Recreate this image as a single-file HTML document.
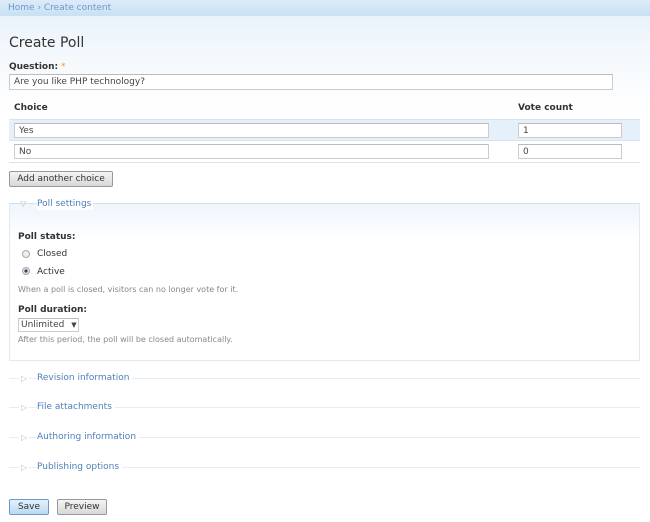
<!DOCTYPE html>
<html><head><style>
*{box-sizing:border-box;margin:0;padding:0}
body{width:650px;height:522px;overflow:hidden;font-family:"DejaVu Sans","Liberation Sans",sans-serif;font-size:9px;color:#333;background:linear-gradient(#eaf3fb 18px,#f3f8fc 50px,#fff 110px);position:relative}
.a{position:absolute}
.bc{left:0;top:0;width:650px;height:17px;background:linear-gradient(#dcebf8,#c9e0f3);border-bottom:1px solid #e8f1f9}
.bc span{position:absolute;left:8px;top:3px;color:#6a9bcc;font-size:9px}
h1{position:absolute;left:9px;top:34px;font-size:14px;font-weight:normal;color:#333}
b{font-weight:bold}
.in{position:absolute;background:#fff;border:1px solid #ccc;border-top-color:#bbb;padding-left:4px;line-height:14px;font-size:9px;color:#444}
.btn{position:absolute;border:1px solid #999;background:linear-gradient(#f4f4f4,#d8d8d8);border-radius:2px;text-align:center;line-height:14px;font-size:9px;color:#333}
.leg{position:absolute;left:9px;width:631px;height:1px;background:#e3edf6}
.leg span{position:absolute;left:28px;top:-5px;background:#fff;padding:0 3px 0 0;color:#4f7fb8;font-size:9px}
.leg i{position:absolute;left:10px;top:-4px;font-style:normal;color:#bbb;font-size:8px;background:#fff;padding:0 2px}
.rad{position:absolute;width:8px;height:8px;border-radius:50%;border:1px solid #aaa;background:#eee}
.d{color:#888;font-size:8px}
</style></head><body>
<div class="a bc"><span>Home › Create content</span></div>
<h1 style="top:35px">Create Poll</h1>
<div class="a" style="left:9px;top:62px"><b>Question:</b> <span style="color:#f90">*</span></div>
<div class="in" style="left:9px;top:74px;width:604px;height:16px">Are you like PHP technology?</div>
<div class="a" style="left:14px;top:103px"><b>Choice</b></div>
<div class="a" style="left:518px;top:103px"><b>Vote count</b></div>
<div class="a" style="left:9px;top:119px;width:631px;height:22px;background:#e6f0fa;border-top:1px solid #d6e4f1;border-bottom:1px solid #d6e4f1"></div>
<div class="a" style="left:9px;top:162px;width:631px;height:1px;background:#d6e4f1"></div>
<div class="in" style="left:14px;top:123px;width:475px;height:15px">Yes</div>
<div class="in" style="left:518px;top:123px;width:104px;height:15px">1</div>
<div class="in" style="left:14px;top:144px;width:475px;height:15px">No</div>
<div class="in" style="left:518px;top:144px;width:104px;height:15px">0</div>
<div class="btn" style="left:9px;top:171px;width:104px;height:16px">Add another choice</div>
<div class="a" style="left:9px;top:203px;width:631px;height:158px;border:1px solid #e0eaf3;border-top:1px solid #d0e2f2;background:linear-gradient(#eef5fc,#fff 35px)"></div>
<div class="a" style="left:20px;top:199px;color:#bbb;font-size:8px">▽</div>
<div class="a" style="left:37px;top:198px;color:#4f7fb8;background:#fff;padding-right:2px;line-height:12px">Poll settings</div>
<div class="a" style="left:18px;top:232px"><b>Poll status:</b></div>
<div class="rad" style="left:22px;top:250px"></div>
<div class="a" style="left:37px;top:249px">Closed</div>
<div class="rad" style="left:22px;top:267px;background:radial-gradient(#345 30%,#dde 45%)"></div>
<div class="a" style="left:37px;top:267px">Active</div>
<div class="a d" style="left:18px;top:285px">When a poll is closed, visitors can no longer vote for it.</div>
<div class="a" style="left:18px;top:305px"><b>Poll duration:</b></div>
<div class="in" style="left:18px;top:318px;width:61px;height:14px;line-height:12px;padding-left:2px">Unlimited <span style="font-size:7px;margin-left:4px">▼</span></div>
<div class="a d" style="left:18px;top:335px">After this period, the poll will be closed automatically.</div>
<div class="leg" style="top:378px"><i>▷</i><span>Revision information</span></div>
<div class="leg" style="top:407px"><i>▷</i><span>File attachments</span></div>
<div class="leg" style="top:437px"><i>▷</i><span>Authoring information</span></div>
<div class="leg" style="top:467px"><i>▷</i><span>Publishing options</span></div>
<div class="btn" style="left:9px;top:499px;width:40px;height:16px;background:linear-gradient(#e3f1fc,#b9daf3);border-color:#6a9bcc">Save</div>
<div class="btn" style="left:57px;top:499px;width:50px;height:16px">Preview</div>
</body></html>
